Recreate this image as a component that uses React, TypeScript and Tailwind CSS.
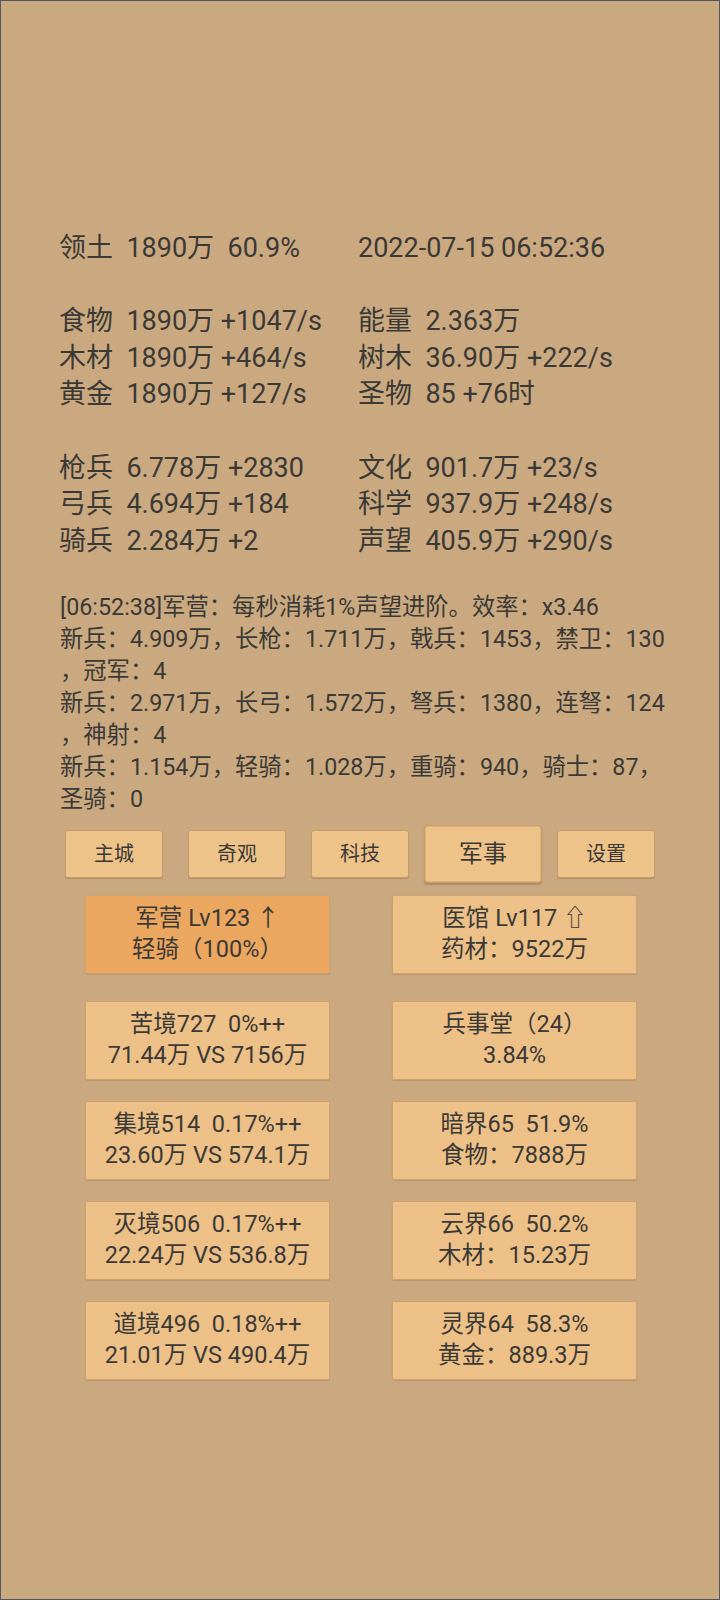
import React from 'react';

const FONT = { fontFamily: 'Roboto, "Noto Sans CJK SC", sans-serif' };

// 资源面板：左右两列，空行用 null 占位
const STATS: ([string, string] | null)[] = [
  ['领土  1890万  60.9%', '2022-07-15 06:52:36'],
  null,
  ['食物  1890万 +1047/s', '能量  2.363万'],
  ['木材  1890万 +464/s', '树木  36.90万 +222/s'],
  ['黄金  1890万 +127/s', '圣物  85 +76时'],
  null,
  ['枪兵  6.778万 +2830', '文化  901.7万 +23/s'],
  ['弓兵  4.694万 +184', '科学  937.9万 +248/s'],
  ['骑兵  2.284万 +2', '声望  405.9万 +290/s'],
];

const LOG = [
  '[06:52:38]军营：每秒消耗1%声望进阶。效率：x3.46',
  '新兵：4.909万，长枪：1.711万，戟兵：1453，禁卫：130',
  '，冠军：4',
  '新兵：2.971万，长弓：1.572万，弩兵：1380，连弩：124',
  '，神射：4',
  '新兵：1.154万，轻骑：1.028万，重骑：940，骑士：87，',
  '圣骑：0',
];

const TABS = ['主城', '奇观', '科技', '军事', '设置'];
const ACTIVE_TAB = '军事';

const CARDS: [string, string][] = [
  ['苦境727  0%++', '71.44万 VS 7156万'],
  ['兵事堂（24）', '3.84%'],
  ['集境514  0.17%++', '23.60万 VS 574.1万'],
  ['暗界65  51.9%', '食物：7888万'],
  ['灭境506  0.17%++', '22.24万 VS 536.8万'],
  ['云界66  50.2%', '木材：15.23万'],
  ['道境496  0.18%++', '21.01万 VS 490.4万'],
  ['灵界64  58.3%', '黄金：889.3万'],
];

function Card({ top, bottom, active }: { top: string; bottom: string; active?: boolean }) {
  return (
    <div
      className={`w-[245px] h-[79px] justify-self-center flex flex-col items-center justify-center rounded-[2px] border border-[#cfa26d] shadow-[0_1px_1px_rgba(120,80,40,0.2)] text-[23.5px] leading-[31.6px] whitespace-pre ${
        active ? 'bg-[#eba65f]' : 'bg-[#ecc087]'
      }`}
    >
      <div>{top}</div>
      <div>{bottom}</div>
    </div>
  );
}

export default function App() {
  return (
    <div className="w-[720px] h-[1600px] bg-[#caa980] border border-[#4f5666] text-[#3b3936] overflow-hidden" style={FONT}>
      {/* 资源统计 */}
      <div className="pt-[229px] pl-[58px] text-[27px] leading-[36.6px] whitespace-pre">
        {STATS.map((row, i) =>
          row ? (
            <div key={i} className="grid grid-cols-[299px_1fr]">
              <div>{row[0]}</div>
              <div>{row[1]}</div>
            </div>
          ) : (
            <div key={i} className="h-[36.6px]" />
          ),
        )}
      </div>

      {/* 军营日志 */}
      <div className="mt-[33px] pl-[59px] text-[23.3px] leading-[31.9px] whitespace-pre">
        {LOG.map((line, i) => (
          <div key={i}>{line}</div>
        ))}
      </div>

      {/* 页签 */}
      <div className="mt-[14px] flex justify-center gap-[25px]">
        {TABS.map((t) => (
          <button
            key={t}
            className={`w-[98px] h-[48px] rounded-[3px] bg-[#edc389] border border-[#c99d68] text-[20px] text-[#3b3936] shadow-[0_1px_1px_rgba(120,80,40,0.3)] ${
              t === ACTIVE_TAB ? 'scale-[1.2] border-[#b58d5e]' : ''
            }`}
          >
            {t}
          </button>
        ))}
      </div>

      {/* 建筑 */}
      <div className="mt-[17px] w-[614px] ml-[53px] grid grid-cols-2">
        <Card top="军营 Lv123 ↑" bottom="轻骑（100%）" active />
        <Card top="医馆 Lv117 ⇧" bottom="药材：9522万" />
      </div>

      <div className="mt-[27px] w-[614px] ml-[53px] grid grid-cols-2 gap-y-[21px]">
        {CARDS.map(([a, b], i) => (
          <Card key={i} top={a} bottom={b} />
        ))}
      </div>
    </div>
  );
}
